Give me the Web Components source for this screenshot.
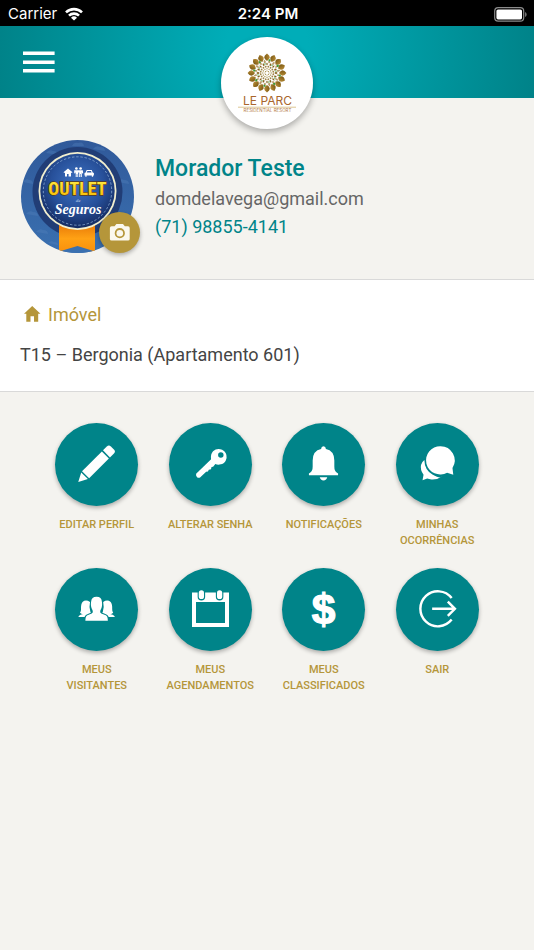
<!DOCTYPE html>
<html lang="pt-BR">
<head>
<meta charset="utf-8">
<meta name="viewport" content="width=device-width, initial-scale=1">
<title>Le Parc - Perfil</title>
<style>
  body {
    margin: 0;
    min-height: 100vh;
    background: #f4f3ef;
    font-family: Roboto, "Liberation Sans", sans-serif;
    --teal: #008489;
    --gold: #b5963a;
  }
</style>
</head>
<body>
<profile-page></profile-page>

<script>
class StatusBar extends HTMLElement {
  constructor() {
    super();
    this.attachShadow({ mode: 'open' });
  }

  connectedCallback() {
    this.shadowRoot.innerHTML = `
      <style>
        :host {
          display: grid;
          grid-template-columns: 1fr auto 1fr;
          align-items: center;
          height: 26px;
          padding: 0 6px 0 8px;
          background: #000;
          color: #fff;
          font: 15px/28px Inter, sans-serif;
        }
        .carrier { display: flex; align-items: center; gap: 8px; }
        .time { font-weight: 600; }
        .battery { justify-self: end; }
        svg { display: block; }
      </style>
      <span class="carrier">Carrier
        <svg width="18" height="14" viewBox="0 0 18 14" fill="none" stroke="#fff" stroke-width="2.6" aria-hidden="true">
          <path d="M1 5.4a11.5 11.5 0 0 1 16 0M4 8.6a7.2 7.2 0 0 1 10 0"/>
          <path d="M9 13.6L6 10.7a4.3 4.3 0 0 1 6 0z" fill="#fff" stroke="none"/>
        </svg>
      </span>
      <span class="time">2:24 PM</span>
      <svg class="battery" width="34" height="15" viewBox="0 0 34 15" aria-hidden="true">
        <rect x=".7" y=".7" width="29" height="13.4" rx="3.4" fill="none" stroke="#8b8b8b" stroke-width="1.2"/>
        <rect x="2.4" y="2.4" width="25.6" height="10" rx="1.6" fill="#fff"/>
        <path d="M31.2 5v5c1.8-.8 1.8-4.2 0-5z" fill="#8b8b8b"/>
      </svg>
    `;
  }
}
customElements.define('status-bar', StatusBar);

class ParcLogo extends HTMLElement {
  constructor() {
    super();
    this.attachShadow({ mode: 'open' });
  }

  connectedCallback() {
    this.shadowRoot.innerHTML = `
      <style>
        :host {
          display: block;
          width: 92px;
          height: 92px;
          border-radius: 50%;
          background: #fff;
          box-shadow: 0 3px 6px rgba(0, 0, 0, 0.3);
        }
        svg { display: block; }
      </style>
      <svg width="92" height="92" viewBox="0 0 92 92" role="img" aria-label="Le Parc">
        <defs>
          <linearGradient id="petal">
            <stop offset="0" stop-color="#7d5a14"/>
            <stop offset="1" stop-color="#b58a35"/>
          </linearGradient>
        </defs>
        <g transform="translate(46 36)">
          ${this.ring(16, 0, '<path d="M0-19.4Q5.6-15.6 0-12Q-5.6-15.6 0-19.4z" fill="url(#petal)"/>')}
          ${this.ring(16, 11.25, '<path d="M0-13.6Q2.2-11.4 0-9.6Q-2.2-11.4 0-13.6z" fill="#b89a68"/>')}
          ${this.ring(8, 11.25, '<circle cy="-13" r="1.1" fill="#3b9b35"/>')}
          ${this.ring(16, 0, '<path d="M0-10.6Q1.8-9 0-7.4Q-1.8-9 0-10.6z" fill="#86641f"/>')}
          ${this.ring(8, 33, '<circle cy="-9.2" r=".7" fill="#58a84c"/>')}
          ${this.ring(16, 11.25, '<circle cy="-6.4" r=".9" fill="#a08546"/>')}
          ${this.ring(12, 0, '<circle cy="-4.2" r=".8" fill="#b5a36b"/>')}
          ${this.ring(8, 0, '<circle cy="-2.1" r=".6" fill="#b19a5c"/>')}
        </g>
        <text x="46.5" y="68" text-anchor="middle" font-family="Inter, sans-serif" font-size="12" fill="#a9662c">LE PARC</text>
        <path d="M17 70.2h58" stroke="#d9bf86" stroke-width=".9"/>
        <text x="46.5" y="75.4" text-anchor="middle" font-family="Inter, sans-serif" font-size="4.5" fill="#b57b4a">RESIDENTIAL RESORT</text>
      </svg>
    `;
  }

  ring(count, start, shape) {
    let out = '';
    for (let i = 0; i < count; i++) {
      out += `<g transform="rotate(${start + i * 360 / count})">${shape}</g>`;
    }
    return out;
  }
}
customElements.define('parc-logo', ParcLogo);

class AppHeader extends HTMLElement {
  constructor() {
    super();
    this.attachShadow({ mode: 'open' });
  }

  connectedCallback() {
    this.shadowRoot.innerHTML = `
      <style>
        :host {
          display: flex;
          align-items: center;
          position: relative;
          height: 72px;
          padding: 0 19px;
          background: radial-gradient(circle farthest-corner at 50% 30%, #00adb8 15%, #008288 100%);
        }
        button {
          padding: 4px;
          border: 0;
          background: none;
          cursor: pointer;
        }
        svg { display: block; }
        /* hangs over the bottom edge of the bar */
        ::slotted(parc-logo) {
          position: absolute;
          top: 11px;
          left: calc(50% - 46px);
        }
      </style>
      <button type="button" aria-label="Menu">
        <svg width="32" height="22" viewBox="0 0 32 22" fill="#fff" aria-hidden="true">
          <path d="M0 .6h31.6v3.5H0zM0 9.4h31.6v3.5H0zM0 18.1h31.6v3.5H0z"/>
        </svg>
      </button>
      <slot></slot>
    `;
  }
}
customElements.define('app-header', AppHeader);

class UserAvatar extends HTMLElement {
  constructor() {
    super();
    this.attachShadow({ mode: 'open' });
  }

  connectedCallback() {
    this.shadowRoot.innerHTML = `
      <style>
        :host { display: block; position: relative; flex: none; }
        svg { display: block; }
        .photo { border-radius: 50%; }
        button {
          position: absolute;
          right: -6px;
          bottom: 0;
          display: grid;
          place-items: center;
          width: 41px;
          height: 41px;
          padding: 0;
          border: 0;
          border-radius: 50%;
          background: var(--gold);
          box-shadow: 0 2px 4px rgba(0, 0, 0, 0.3);
          cursor: pointer;
        }
      </style>
      <svg class="photo" width="113" height="113" viewBox="0 0 113 113" role="img" aria-label="Outlet de Seguros">
        <defs>
          <radialGradient id="disc" cx=".5" cy=".4" r=".6">
            <stop offset="0" stop-color="#3f74c4"/>
            <stop offset=".6" stop-color="#27509a"/>
            <stop offset="1" stop-color="#152c62"/>
          </radialGradient>
          <linearGradient id="sky" x2="0" y2="1">
            <stop offset="0" stop-color="#30599a"/>
            <stop offset="1" stop-color="#3a70b0"/>
          </linearGradient>
          <linearGradient id="ribbon" x2="0" y2="1">
            <stop offset="0" stop-color="#e87a08"/>
            <stop offset=".5" stop-color="#ffa114"/>
            <stop offset="1" stop-color="#f98f0c"/>
          </linearGradient>
          <linearGradient id="gold" x2="0" y2="1">
            <stop offset="0" stop-color="#fff04a"/>
            <stop offset="1" stop-color="#f7b800"/>
          </linearGradient>
        </defs>
        <rect width="113" height="113" fill="url(#sky)"/>
        <g fill="#5585bd" opacity=".35">
          <path d="M51 6q2-4 6-3q5-2 6 3zM72 9q3-4 7-2q5 0 5 4zM25 13q3-4 7-2q5 0 5 4zM2 42q3-4 6-2q4 0 4 4zM5 74q3-4 7-2q5 0 5 4zM15 92q3-4 7-2q5 0 5 4zM96 42q3-4 7-2q5 0 5 4zM27 103q3-3 6-1q4 0 4 3z"/>
        </g>
        <circle cx="56.5" cy="52" r="45" fill="#213d76"/>
        <path d="M38 84q18.5 10 36 0V113l-17.5-6L38 113z" fill="url(#ribbon)"/>
        <path d="M38 111.5l18.5-5.5L74 111.5V113H38z" fill="#3a70b0"/>
        <circle cx="56.5" cy="51" r="39" fill="#f2efcf"/>
        <circle cx="56.5" cy="51" r="37.2" fill="url(#disc)"/>
        <circle cx="56.5" cy="51" r="34.2" fill="none" stroke="#8fb0d8" stroke-width=".8" stroke-dasharray="2.4 1.8"/>
        <g fill="#fff">
          <path d="M42.5 32.2l4.5-3.7 4.5 3.7-.8.8-.7-.5v4h-2.4v-2.6h-1.6v2.6H44v-4l-.7.5z"/>
          <circle cx="55.4" cy="28.5" r="1.3"/>
          <circle cx="59.6" cy="28.5" r="1.3"/>
          <path d="M53.2 30.2h8.6l.4 3-1 .3-.4-1.5v5h-1v-3h-.6v3h-1v-4.5h-1v4.5h-.9v-3h-.6v3h-1v-5l-.6 1.5-.9-.3z"/>
          <path d="M63.5 33l1.2-.4 1-2.6h5l1 2.6 1.2.4v2.5h-.8v1.2h-1.3v-1.2h-5.2v1.2h-1.3v-1.2h-.8zM65.8 32.5h4.8l-.6-1.6h-3.6z" fill-rule="evenodd"/>
        </g>
        <g text-anchor="middle">
          <text x="56.5" y="55" font-family="'Liberation Sans Narrow', 'Roboto Condensed', 'Liberation Sans', sans-serif" font-size="18" font-weight="700" fill="url(#gold)" stroke="#5c3a10" stroke-width="1.4" paint-order="stroke">OUTLET</text>
          <text x="57" y="62" font-family="'Liberation Serif', serif" font-size="5" font-style="italic" fill="#c6d7ee">de</text>
          <text x="57" y="74" font-family="'Liberation Serif', serif" font-size="14" font-style="italic" font-weight="700" fill="#fff">Seguros</text>
        </g>
      </svg>
      <button type="button" aria-label="Alterar foto">
        <svg width="22" height="20" viewBox="0 0 22 20" aria-hidden="true">
          <path d="M7.4 1h6.6l1.8 2.2H19q1.7 0 1.7 1.7v11q0 1.7-1.7 1.7H2.6q-1.7 0-1.7-1.7v-11q0-1.7 1.7-1.7h3zM10.8 5.1a5.1 5.1 0 1 0 0 10.2a5.1 5.1 0 1 0 0-10.2z" fill="#fbf8ee" fill-rule="evenodd"/>
          <circle cx="10.8" cy="10.2" r="3.3" fill="#fbf8ee"/>
        </svg>
      </button>
    `;
  }
}
customElements.define('user-avatar', UserAvatar);

class ProfileCard extends HTMLElement {
  constructor() {
    super();
    this.attachShadow({ mode: 'open' });
  }

  connectedCallback() {
    this.shadowRoot.innerHTML = `
      <style>
        :host {
          display: flex;
          align-items: center;
          gap: 21px;
          padding: 42px 21px 26px;
        }
        h1, p { margin: 0; }
        h1 {
          font-size: 23px;
          line-height: 32px;
          font-weight: 500;
          color: var(--teal);
        }
        p {
          font-size: 18px;
          line-height: 28px;
          color: #666;
        }
        a { color: var(--teal); text-decoration: none; }
      </style>
      <user-avatar></user-avatar>
      <div>
        <h1>${this.getAttribute('name')}</h1>
        <p>${this.getAttribute('email')}</p>
        <p><a href="tel:+5571988554141">${this.getAttribute('phone')}</a></p>
      </div>
    `;
  }
}
customElements.define('profile-card', ProfileCard);

class PropertyCard extends HTMLElement {
  constructor() {
    super();
    this.attachShadow({ mode: 'open' });
  }

  connectedCallback() {
    this.shadowRoot.innerHTML = `
      <style>
        :host {
          display: flex;
          flex-direction: column;
          gap: 10px;
          padding: 20px 20px 21px;
          border-top: 1px solid #d9d9d9;
          border-bottom: 1px solid #d9d9d9;
          background: #fff;
          color: #444;
          font-size: 18px;
          line-height: 30px;
        }
        h2 {
          display: flex;
          align-items: center;
          gap: 4px;
          margin: 0;
          font-size: 18px;
          font-weight: 400;
          color: var(--gold);
        }
      </style>
      <h2>
        <svg width="24" height="20" viewBox="0 0 24 20" fill="currentColor" aria-hidden="true">
          <path d="M12.2 1L20.5 8.8H18.2V16.7H14V11.3H10.5V16.7H6.3V8.8H4z"/>
        </svg>
        Imóvel
      </h2>
      <slot></slot>
    `;
  }
}
customElements.define('property-card', PropertyCard);

const icons = {
  edit: `
    <path d="M23 58.2l2.9-9.2 6.6 6.4z"/>
    <path d="M26.7 47.7L46.3 28.2 53.2 35 33.7 54.7z"/>
    <path d="M47.4 27l3.8-3.8q2-2 4 0l3 3q2 2 0 4l-3.9 3.8z"/>
  `,
  key: `
    <path fill-rule="evenodd" d="M43.5 28q4-3.8 9-1.5q5 2.8 4.4 8q-1.2 6-7 6.6q-2.5.2-4.1-.6l-2.2 2.6-1.6.4-.5 2.2-2.2.5-.8 1.7-1.8.2-6 5.8q-1.5.6-3-.4q-1.4-1.5-.9-3.3L41.6 35.8Q40.8 31 43.5 28zM51.2 29a2.7 2.7 0 1 0 0 5.4a2.7 2.7 0 1 0 0-5.4z"/>
  `,
  bell: `
    <path d="M41 23q2.2.2 2.4 2.8Q51.6 27.5 51.7 37v6q0 4.5 2.3 5.8l1.4 1.2v1.7H26.6V50l1.4-1.2q2.3-1.3 2.3-5.8v-6Q30.4 27.5 38.6 25.8q.2-2.6 2.4-2.8z"/>
    <path d="M37.3 53.7h7.4q-.7 3.1-3.7 3.1t-3.7-3.1z"/>
  `,
  chat: `
    <path d="M28 36.5q.3 10 8 14.3t9.3 2q-5 3.7-11.5 2.8l-3-.7-4.6 1.7 1-5.5q-3.5-4.5-2.5-9.5 1-3.5 3.3-5.1z"/>
    <path d="M44 22.9a14 14 0 0 1 11.8 21.5l.8 6.7-6.1-2A14 14 0 1 1 44 22.9z"/>
  `,
  people: `
    <path d="M35.7 33Q36 28.4 41 28.3t5.3 4.7q.9 5-1.4 8.8-1 2.2.8 3.2l4.5 1.7q2 1 2 5.3H30q0-4.300 2-5.300l4.300-1.700q1.800-1 .8-3.200-2.300-3.800-1.400-8.800z"/>
    <path d="M34.6 33.5q-4.2-2.6-7.4 0-1.7 1.8-1.5 7 .1 2.8-1 3.7 1.4 1.3 2.8 1.4-3.9.5-4.4 2.7h6q.8-2 3.9-3.1l2.4-1-.5-1.3q-1.5-4-.3-9.4z"/>
    <path d="M47.6 33.5q4.2-2.6 7.4 0 1.7 1.8 1.5 7-.1 2.8 1 3.7-1.4 1.3-2.8 1.4 3.9.5 4.4 2.7h-6q-.8-2-3.9-3.1l-2.4-1 .5-1.3q1.5-4 .3-9.4z"/>
  `,
  calendar: `
    <path fill-rule="evenodd" d="M22.7 24.3H59.3V58.3H22.7zM26.7 33.5V54.3H55.3V33.5z"/>
    <rect x="28.3" y="20" width="7.4" height="12" rx="3.7" fill="#008489"/>
    <rect x="46.3" y="20" width="7.4" height="12" rx="3.7" fill="#008489"/>
    <rect x="29.4" y="22" width="5.2" height="8.7" rx="2.6"/>
    <rect x="47.4" y="22" width="5.2" height="8.7" rx="2.6"/>
  `,
  money: `
    <text x="41" y="55" text-anchor="middle" font-family="'Liberation Sans', sans-serif" font-size="42" font-weight="700" stroke="#fff" stroke-width="1.2">$</text>
  `,
  exit: `
    <path d="M55 29.7A17.3 17.3 0 1 0 55 51M35.7 40.3H58M51.2 33.3L58.2 40.3 51.2 47.3" fill="none" stroke="#fff" stroke-width="2.4"/>
  `
};

class ActionTile extends HTMLElement {
  constructor() {
    super();
    this.attachShadow({ mode: 'open' });
  }

  connectedCallback() {
    this.shadowRoot.innerHTML = `
      <style>
        :host { display: block; }
        button {
          display: flex;
          flex-direction: column;
          align-items: center;
          gap: 11px;
          width: 100%;
          padding: 0;
          border: 0;
          background: none;
          color: var(--gold);
          font: 500 11px/16px Roboto, sans-serif;
          cursor: pointer;
        }
        svg {
          display: block;
          border-radius: 50%;
          background: var(--teal);
          box-shadow: 0 2px 4px rgba(0, 0, 0, 0.3);
        }
        .label { max-width: 90px; }
      </style>
      <button type="button">
        <svg width="83" height="83" viewBox="0 0 82 82" fill="#fff" aria-hidden="true">
          ${icons[this.getAttribute('icon')]}
        </svg>
        <span class="label"><slot></slot></span>
      </button>
    `;
  }
}
customElements.define('action-tile', ActionTile);

class ActionGrid extends HTMLElement {
  constructor() {
    super();
    this.attachShadow({ mode: 'open' });
  }

  connectedCallback() {
    this.shadowRoot.innerHTML = `
      <style>
        :host {
          display: grid;
          grid-template-columns: repeat(4, 1fr);
          row-gap: 19px;
          padding: 31px 40px;
        }
      </style>
      <slot></slot>
    `;
  }
}
customElements.define('action-grid', ActionGrid);

class ProfilePage extends HTMLElement {
  constructor() {
    super();
    this.attachShadow({ mode: 'open' });
  }

  connectedCallback() {
    this.shadowRoot.innerHTML = `
      <style>
        :host { display: block; }
      </style>
      <status-bar></status-bar>
      <app-header><parc-logo></parc-logo></app-header>
      <main>
        <profile-card name="Morador Teste" email="domdelavega@gmail.com" phone="(71) 98855-4141"></profile-card>
        <property-card>T15 – Bergonia (Apartamento 601)</property-card>
        <action-grid>
          <action-tile icon="edit">EDITAR PERFIL</action-tile>
          <action-tile icon="key">ALTERAR SENHA</action-tile>
          <action-tile icon="bell">NOTIFICAÇÕES</action-tile>
          <action-tile icon="chat">MINHAS OCORRÊNCIAS</action-tile>
          <action-tile icon="people">MEUS VISITANTES</action-tile>
          <action-tile icon="calendar">MEUS AGENDAMENTOS</action-tile>
          <action-tile icon="money">MEUS CLASSIFICADOS</action-tile>
          <action-tile icon="exit">SAIR</action-tile>
        </action-grid>
      </main>
    `;
  }
}
customElements.define('profile-page', ProfilePage);
</script>
</body>
</html>
